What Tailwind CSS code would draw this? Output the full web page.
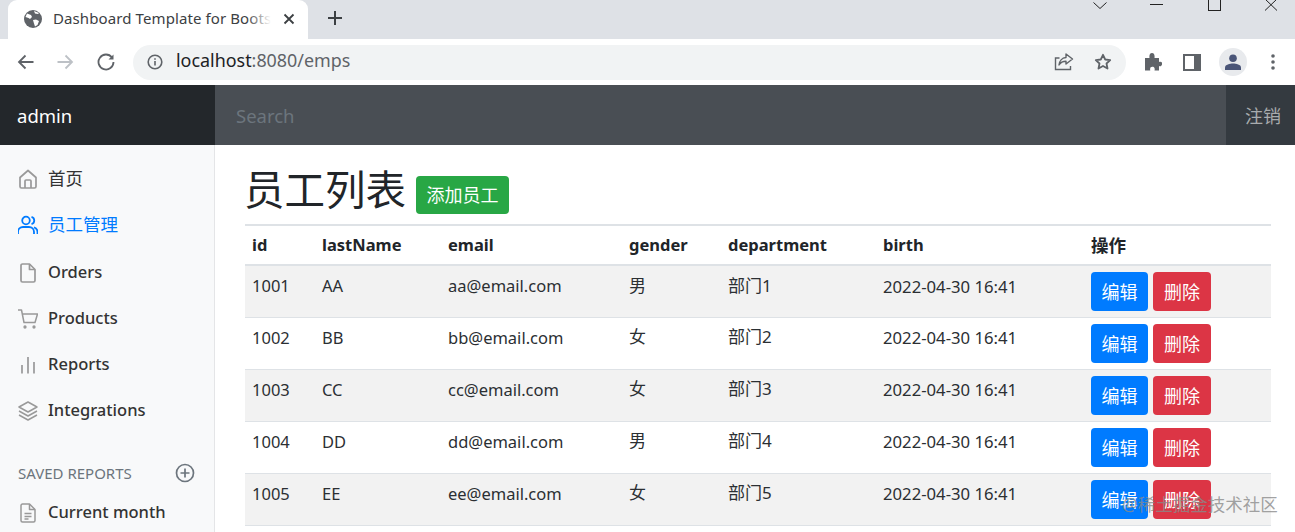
<!DOCTYPE html>
<html lang="en">

<head>
    <meta charset="UTF-8">
    <meta name="viewport" content="width=device-width, initial-scale=1.0">
    <title>Dashboard Template for Bootstrap</title>
    <script src="https://cdn.jsdelivr.net/npm/@tailwindcss/browser@4"></script>
</head>

<body class="relative h-[532px] w-[1295px] overflow-hidden bg-white font-['Noto_Sans','Noto_Sans_CJK_SC',sans-serif]">
    <!-- tab strip -->
    <div class="flex h-[39px] bg-[#dee1e6]">
        <div class="ml-[8px] flex h-[39px] w-[300px] items-center rounded-t-[9px] bg-white pb-[2px] pl-[16px] text-[#3c4043]">
            <svg class="h-[18px] w-[18px] shrink-0" viewBox="0 0 18 18">
                <circle cx="9" cy="9" r="9" fill="#5f6368" />
                <path d="M3 3.500l4 1.500 1 2-2 2-1.500-1L1.500 7M10 1l1 2.500 3 .5 1-1M9 10l3-.500 3 1.500-1.500 4-2.500 1.500-1-3z" fill="#fff" />
            </svg>
            <span class="relative ml-[11px] w-[218px] overflow-hidden whitespace-nowrap text-[15px] tracking-[.1px]">Dashboard Template for Boots<span class="absolute right-0 top-0 h-full w-[24px] bg-gradient-to-r from-white/0 to-white"></span></span>
            <svg class="ml-[12px] h-[12px] w-[12px]" viewBox="0 0 12 12" fill="none" stroke="#3c4043" stroke-width="1.800">
                <path d="M1.500 1.500l9 9M10.500 1.500l-9 9" />
            </svg>
        </div>
        <svg class="ml-[19px] mt-[10px] h-[16px] w-[16px]" viewBox="0 0 16 16" stroke="#3c4043" stroke-width="2">
            <path d="M8 1v14M1 8h14" />
        </svg>
        <div class="ml-auto flex h-[12px] items-start">
            <svg class="mr-[43px] h-[10px] w-[14px]" viewBox="0 0 14 10" fill="none" stroke="#222" stroke-width="1">
                <path d="M.500 2.500L7 8.500l6.500-6" />
            </svg>
            <div class="mr-[45px] mt-[4px] h-[1px] w-[13px] bg-[#222]"></div>
            <div class="mr-[43px] h-[11px] w-[13px] border border-t-0 border-[#222]"></div>
            <svg class="mr-[17px] h-[11px] w-[14px]" viewBox="0 0 14 11" fill="none" stroke="#222" stroke-width="1">
                <path d="M1 -1l12 11.500M13 -1L1 10.500" />
            </svg>
        </div>
    </div>

    <!-- address bar -->
    <div class="flex h-[46px] items-center bg-white">
        <svg class="ml-[17px] h-[16px] w-[17px]" viewBox="0 0 17 16" fill="none" stroke="#5f6368" stroke-width="1.800">
            <path d="M16.500 8H2M8.500 1.500L2 8l6.500 6.500" />
        </svg>
        <svg class="ml-[23px] h-[16px] w-[17px]" viewBox="0 0 17 16" fill="none" stroke="#bdc1c6" stroke-width="1.800">
            <path d="M.500 8H15M8.500 1.500L15 8l-6.500 6.500" />
        </svg>
        <svg class="ml-[23px] h-[18px] w-[18px]" viewBox="0 0 18 18" fill="none" stroke="#5f6368" stroke-width="1.800">
            <path d="M15 4.500A7.500 7.500 0 1 0 16.500 9" />
            <path d="M16.500 1.500v5h-5z" fill="#5f6368" stroke="none" />
        </svg>
        <div class="ml-[18px] flex h-[35px] w-[993px] items-center rounded-full bg-[#f1f3f4] pl-[14px]">
            <svg class="h-[16px] w-[16px]" viewBox="0 0 16 16" fill="none" stroke="#5f6368" stroke-width="1.600">
                <circle cx="8" cy="8" r="6.800" />
                <path d="M8 7v4.500M8 4.200v1.600" />
            </svg>
            <span class="ml-[13px] pb-[2px] text-[17.900px] leading-none text-[#202124]">localhost<span class="text-[#5f6368]">:8080/emps</span></span>
            <svg class="ml-auto h-[18px] w-[20px]" viewBox="0 0 20 18" fill="none" stroke="#5f6368" stroke-width="1.400">
                <path d="M5.500 5H1.500v11.500h15V13" />
                <path d="M12 1l6.500 5-6.500 5V8.300C9 8.300 6.500 9.500 5 12c.300-4 3-7.200 7-7.500z" stroke-linejoin="round" />
            </svg>
            <svg class="ml-[20px] mr-[14px] h-[18px] w-[18px]" viewBox="0 0 18 18" fill="none" stroke="#5f6368" stroke-width="1.800">
                <path d="M9 1.800l2.200 4.700 5 .6-3.700 3.400 1 5L9 13l-4.500 2.500 1-5L1.800 7.100l5-.6z" stroke-linejoin="round" />
            </svg>
        </div>
        <svg class="ml-[18px] h-[18px] w-[18px]" viewBox="0 0 18 18" fill="#5f6368">
            <path d="M1 5h4.500C5 1.500 6.300 0 8 0s3 1.500 2.500 5H15v4c3-.8 3.500 1 3 2.500s-1.500 2.300-3 1.500v4.500h-4.500c.7-3-.6-3.700-2.200-3.700S5.700 15 6.300 17.500H1z" />
        </svg>
        <svg class="ml-[21px] h-[17px] w-[18px]" viewBox="0 0 18 17">
            <path d="M0 0h18v17H0z" fill="#5f6368" />
            <path d="M2 2h9v13H2z" fill="#fff" />
        </svg>
        <div class="ml-[18px] flex h-[28px] w-[28px] items-center justify-center rounded-full bg-[#e8eaed]">
            <svg class="h-[16px] w-[16px]" viewBox="0 0 16 16" fill="#4a5578">
                <circle cx="8" cy="4.300" r="3.800" />
                <path d="M0 16v-2.500C0 10.500 5 9.500 8 9.500s8 1 8 4V16z" />
            </svg>
        </div>
        <svg class="ml-[24px] h-[16px] w-[4px]" viewBox="0 0 4 16" fill="#5f6368">
            <circle cx="2" cy="2" r="1.800" />
            <circle cx="2" cy="8" r="1.800" />
            <circle cx="2" cy="14" r="1.800" />
        </svg>
    </div>

    <!-- navbar -->
    <nav class="flex h-[60px] bg-[#343a40] text-white">
        <div class="flex w-[215px] shrink-0 items-center bg-[#23272b] pl-[17px] pt-[2px] text-[18.500px]">admin</div>
        <div class="flex flex-1 items-center bg-[#494e54] pl-[21px] pt-[2px] text-[18.500px] text-[#6c757d]">Search</div>
        <div class="flex w-[69px] shrink-0 items-center pl-[19px] pt-[2px] text-[18px] text-[#a8abad]">注销</div>
    </nav>

    <div class="flex h-[387px] overflow-hidden">
        <!-- sidebar -->
        <aside class="w-[215px] shrink-0 border-r border-[#e4e5e7] bg-[#f8f9fa] pl-[18px] text-[16.500px] font-medium text-[#333]">
            <div class="flex h-[46px] items-center pt-[21px] text-[17.500px] font-normal">
                <svg class="h-[20px] w-[20px]" viewBox="0 0 20 20" fill="none" stroke="#999" stroke-width="1.700" stroke-linejoin="round">
                    <path d="M2 8.500L10 1.500l8 7v9a1.500 1.500 0 0 1-1.500 1.500h-13A1.500 1.500 0 0 1 2 17.500z" />
                    <path d="M7 19v-7a1 1 0 0 1 1-1h4a1 1 0 0 1 1 1v7" />
                </svg>
                <span class="ml-[10px]">首页</span>
            </div>
            <div class="mt-[21px] flex h-[25px] items-center text-[17.500px] font-normal text-[#007bff]">
                <svg class="h-[20px] w-[20px]" viewBox="0 0 20 20" fill="none" stroke="#007bff" stroke-width="1.800">
                    <circle cx="8" cy="5.500" r="3.800" />
                    <path d="M0 19v-2a5 5 0 0 1 5-5h6a5 5 0 0 1 5 5v2M13.500 1.800a3.800 3.800 0 0 1 0 7.300M16 12.300a5 5 0 0 1 3.500 4.700v2" />
                </svg>
                <span class="ml-[10px]">员工管理</span>
            </div>
            <div class="mt-[23px] flex h-[25px] items-center">
                <svg class="h-[20px] w-[20px]" viewBox="0 0 20 20" fill="none" stroke="#999" stroke-width="1.700" stroke-linejoin="round">
                    <path d="M11.500 1H4.500A1.500 1.500 0 0 0 3 2.500v15A1.500 1.500 0 0 0 4.500 19h11a1.500 1.500 0 0 0 1.500-1.500V6.500z" />
                    <path d="M11.500 1v5.500H17" />
                </svg>
                <span class="ml-[10px]">Orders</span>
            </div>
            <div class="mt-[21px] flex h-[25px] items-center">
                <svg class="h-[20px] w-[20px]" viewBox="0 0 20 20" fill="none" stroke="#999" stroke-width="1.500" stroke-linejoin="round">
                    <path d="M0 1h3.500l2.500 12.500h11L19.500 5H4.500" />
                    <circle cx="7" cy="18" r=".9" />
                    <circle cx="16" cy="18" r=".9" />
                </svg>
                <span class="ml-[10px]">Products</span>
            </div>
            <div class="mt-[21px] flex h-[25px] items-center">
                <svg class="h-[20px] w-[20px]" viewBox="0 0 20 20" fill="none" stroke="#999" stroke-width="1.700">
                    <path d="M4 18.500V10M10 18.500V2M16 18.500V7" />
                </svg>
                <span class="ml-[10px]">Reports</span>
            </div>
            <div class="mt-[21px] flex h-[25px] items-center">
                <svg class="h-[20px] w-[20px]" viewBox="0 0 20 20" fill="none" stroke="#999" stroke-width="1.500" stroke-linejoin="round">
                    <path d="M10 1L1 6l9 5 9-5zM1 10l9 5 9-5M1 14l9 5 9-5" />
                </svg>
                <span class="ml-[10px]">Integrations</span>
            </div>
            <div class="mt-[38px] flex h-[24px] items-center text-[15px] font-normal text-[#6c757d]">
                SAVED REPORTS
                <svg class="ml-auto mr-[19px] h-[20px] w-[20px]" viewBox="0 0 20 20" fill="none" stroke="#6c757d" stroke-width="1.700">
                    <circle cx="10" cy="10" r="8.500" />
                    <path d="M10 5.500v9M5.500 10h9" />
                </svg>
            </div>
            <div class="mt-[15px] flex h-[25px] items-center">
                <svg class="h-[20px] w-[20px]" viewBox="0 0 20 20" fill="none" stroke="#999" stroke-width="1.500" stroke-linejoin="round">
                    <path d="M11.500 1H4.500A1.500 1.500 0 0 0 3 2.500v15A1.500 1.500 0 0 0 4.500 19h11a1.500 1.500 0 0 0 1.500-1.500V6.500z" />
                    <path d="M11.500 1v5.500H17M6.500 10.500h7M6.500 13.500h7M6.500 16h4" />
                </svg>
                <span class="ml-[10px]">Current month</span>
            </div>
        </aside>

        <!-- main -->
        <main class="ml-[30px] w-[1026px]">
            <div class="flex h-[81px] items-center border-b-2 border-[#dee2e6] pt-[14px]">
                <h2 class="-ml-[1px] mb-[2px] text-[40.500px] leading-none text-[#212529]">员工列表</h2>
                <a class="ml-[10px] mt-[7px] flex h-[38px] w-[93px] items-center justify-center rounded-[4px] bg-[#28a745] text-[18px] text-white">添加员工</a>
            </div>
            <table id="emps" class="w-[1026px] table-fixed border-collapse text-[16.500px] text-[#2b2f33]">
                <colgroup>
                    <col class="w-[70px]">
                    <col class="w-[126px]">
                    <col class="w-[181px]">
                    <col class="w-[99px]">
                    <col class="w-[155px]">
                    <col class="w-[208px]">
                    <col class="w-[187px]">
                </colgroup>
                <thead>
                    <tr class="h-[39px] border-b-2 border-[#dee2e6] text-left text-[16.500px] text-[#212529]">
                        <th class="pl-[7px] font-bold">id</th>
                        <th class="pl-[7px] font-bold">lastName</th>
                        <th class="pl-[7px] font-bold">email</th>
                        <th class="pl-[7px] font-bold">gender</th>
                        <th class="pl-[7px] font-bold">department</th>
                        <th class="pl-[7px] font-bold">birth</th>
                        <th class="pl-[7px] text-[17.500px] font-bold">操作</th>
                    </tr>
                </thead>
                <tbody id="rows"></tbody>
            </table>
        </main>
    </div>

    <!-- watermark -->
    <div class="absolute left-[1122px] top-[494px] whitespace-nowrap text-[17.500px] leading-[20px] text-[#8a8a8a]/80">@稀土掘金技术社区</div>

    <script>
        const emps = [
            { id: 1001, lastName: 'AA', email: 'aa@email.com', gender: '男', department: '部门1' },
            { id: 1002, lastName: 'BB', email: 'bb@email.com', gender: '女', department: '部门2' },
            { id: 1003, lastName: 'CC', email: 'cc@email.com', gender: '女', department: '部门3' },
            { id: 1004, lastName: 'DD', email: 'dd@email.com', gender: '男', department: '部门4' },
            { id: 1005, lastName: 'EE', email: 'ee@email.com', gender: '女', department: '部门5' },
        ];
        const rowsEl = document.getElementById('rows');
        emps.forEach((emp, i) => {
            const stripe = i % 2 === 0 ? 'bg-[#f2f2f2]' : '';
            rowsEl.innerHTML += `
                <tr class="h-[52px] border-b border-[#dee2e6] ${stripe}">
                    <td class="pb-[10px] pl-[7px]">${emp.id}</td>
                    <td class="pb-[10px] pl-[7px]">${emp.lastName}</td>
                    <td class="pb-[10px] pl-[7px]">${emp.email}</td>
                    <td class="pb-[12px] pl-[7px] text-[17px]">${emp.gender}</td>
                    <td class="pb-[12px] pl-[7px] text-[17px]">${emp.department}</td>
                    <td class="pb-[10px] pl-[7px] text-[16.700px]">2022-04-30 16:41</td>
                    <td class="pl-[7px]">
                        <div class="flex gap-[5px] text-[18px] text-white">
                            <a class="flex h-[39px] w-[57px] items-center justify-center rounded-[4px] bg-[#007bff] pt-[2px]">编辑</a>
                            <a class="flex h-[39px] w-[58px] items-center justify-center rounded-[4px] bg-[#dc3545] pt-[2px]">删除</a>
                        </div>
                    </td>
                </tr>`;
        });
    </script>
</body>

</html>
